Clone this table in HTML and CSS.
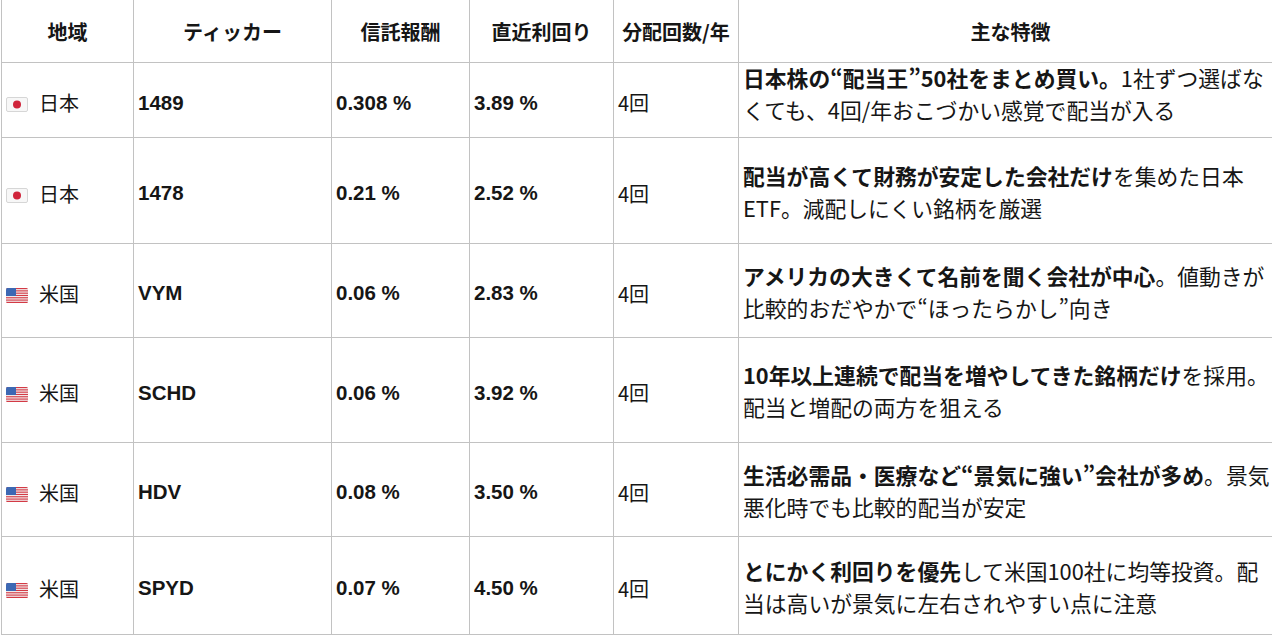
FILE: index.html
```html
<!DOCTYPE html>
<html lang="ja">
<head>
<meta charset="utf-8">
<title>高配当ETF比較</title>
<link rel="stylesheet" href="styles.css">
</head>
<body>
<table class="etf">
  <colgroup>
    <col class="c-region">
    <col class="c-ticker">
    <col class="c-fee">
    <col class="c-yield">
    <col class="c-freq">
    <col class="c-desc">
  </colgroup>
  <thead>
    <tr class="head">
      <th>地域</th>
      <th>ティッカー</th>
      <th>信託報酬</th>
      <th>直近利回り</th>
      <th>分配回数/年</th>
      <th>主な特徴</th>
    </tr>
  </thead>
  <tbody>
    <tr class="r1">
      <td class="region"><span class="flag"><svg viewBox="0 0 22 15" width="22" height="15"><rect x="0.5" y="0.5" width="21" height="14" rx="1.5" fill="#f7f7f7" stroke="#d6d6d6"/><circle cx="11" cy="7.5" r="4" fill="#d0243a"/></svg></span>日本</td>
      <td class="num">1489</td>
      <td class="num">0.308 %</td>
      <td class="num">3.89 %</td>
      <td class="freq">4回</td>
      <td class="desc top"><div class="txt"><b>日本株の“配当王”50社をまとめ買い。</b>1社ずつ選ばなくても、4回/年おこづかい感覚で配当が入る</div></td>
    </tr>
    <tr class="r2">
      <td class="region"><span class="flag"><svg viewBox="0 0 22 15" width="22" height="15"><rect x="0.5" y="0.5" width="21" height="14" rx="1.5" fill="#f7f7f7" stroke="#d6d6d6"/><circle cx="11" cy="7.5" r="4" fill="#d0243a"/></svg></span>日本</td>
      <td class="num">1478</td>
      <td class="num">0.21 %</td>
      <td class="num">2.52 %</td>
      <td class="freq">4回</td>
      <td class="desc"><div class="txt"><b>配当が高くて財務が安定した会社だけ</b>を集めた日本ETF。減配しにくい銘柄を厳選</div></td>
    </tr>
    <tr class="r3">
      <td class="region"><span class="flag"><svg viewBox="0 0 22 15" width="22" height="15"><defs><clipPath id="cl1"><rect width="22" height="15" rx="1.5"/></clipPath></defs><g clip-path="url(#cl1)"><rect width="22" height="15" fill="#f4f4f4"/><rect y="0" width="22" height="1.15" fill="#d33a45"/><rect y="2.3" width="22" height="1.15" fill="#d33a45"/><rect y="4.6" width="22" height="1.15" fill="#d33a45"/><rect y="6.9" width="22" height="1.15" fill="#d33a45"/><rect y="9.2" width="22" height="1.15" fill="#d33a45"/><rect y="11.5" width="22" height="1.15" fill="#d33a45"/><rect y="13.8" width="22" height="1.2" fill="#d33a45"/><rect width="10" height="8" fill="#3d68b3"/></g></svg></span>米国</td>
      <td class="num">VYM</td>
      <td class="num">0.06 %</td>
      <td class="num">2.83 %</td>
      <td class="freq">4回</td>
      <td class="desc"><div class="txt"><b>アメリカの大きくて名前を聞く会社が中心</b>。値動きが比較的おだやかで“ほったらかし”向き</div></td>
    </tr>
    <tr class="r4">
      <td class="region"><span class="flag"><svg viewBox="0 0 22 15" width="22" height="15"><defs><clipPath id="cl2"><rect width="22" height="15" rx="1.5"/></clipPath></defs><g clip-path="url(#cl2)"><rect width="22" height="15" fill="#f4f4f4"/><rect y="0" width="22" height="1.15" fill="#d33a45"/><rect y="2.3" width="22" height="1.15" fill="#d33a45"/><rect y="4.6" width="22" height="1.15" fill="#d33a45"/><rect y="6.9" width="22" height="1.15" fill="#d33a45"/><rect y="9.2" width="22" height="1.15" fill="#d33a45"/><rect y="11.5" width="22" height="1.15" fill="#d33a45"/><rect y="13.8" width="22" height="1.2" fill="#d33a45"/><rect width="10" height="8" fill="#3d68b3"/></g></svg></span>米国</td>
      <td class="num">SCHD</td>
      <td class="num">0.06 %</td>
      <td class="num">3.92 %</td>
      <td class="freq">4回</td>
      <td class="desc"><div class="txt"><b>10年以上連続で配当を増やしてきた銘柄だけ</b>を採用。配当と増配の両方を狙える</div></td>
    </tr>
    <tr class="r5">
      <td class="region"><span class="flag"><svg viewBox="0 0 22 15" width="22" height="15"><defs><clipPath id="cl3"><rect width="22" height="15" rx="1.5"/></clipPath></defs><g clip-path="url(#cl3)"><rect width="22" height="15" fill="#f4f4f4"/><rect y="0" width="22" height="1.15" fill="#d33a45"/><rect y="2.3" width="22" height="1.15" fill="#d33a45"/><rect y="4.6" width="22" height="1.15" fill="#d33a45"/><rect y="6.9" width="22" height="1.15" fill="#d33a45"/><rect y="9.2" width="22" height="1.15" fill="#d33a45"/><rect y="11.5" width="22" height="1.15" fill="#d33a45"/><rect y="13.8" width="22" height="1.2" fill="#d33a45"/><rect width="10" height="8" fill="#3d68b3"/></g></svg></span>米国</td>
      <td class="num">HDV</td>
      <td class="num">0.08 %</td>
      <td class="num">3.50 %</td>
      <td class="freq">4回</td>
      <td class="desc"><div class="txt"><b>生活必需品・医療など“景気に強い”会社が多め</b>。景気悪化時でも比較的配当が安定</div></td>
    </tr>
    <tr class="r6">
      <td class="region"><span class="flag"><svg viewBox="0 0 22 15" width="22" height="15"><defs><clipPath id="cl4"><rect width="22" height="15" rx="1.5"/></clipPath></defs><g clip-path="url(#cl4)"><rect width="22" height="15" fill="#f4f4f4"/><rect y="0" width="22" height="1.15" fill="#d33a45"/><rect y="2.3" width="22" height="1.15" fill="#d33a45"/><rect y="4.6" width="22" height="1.15" fill="#d33a45"/><rect y="6.9" width="22" height="1.15" fill="#d33a45"/><rect y="9.2" width="22" height="1.15" fill="#d33a45"/><rect y="11.5" width="22" height="1.15" fill="#d33a45"/><rect y="13.8" width="22" height="1.2" fill="#d33a45"/><rect width="10" height="8" fill="#3d68b3"/></g></svg></span>米国</td>
      <td class="num">SPYD</td>
      <td class="num">0.07 %</td>
      <td class="num">4.50 %</td>
      <td class="freq">4回</td>
      <td class="desc"><div class="txt"><b>とにかく利回りを優先</b>して米国100社に均等投資。配当は高いが景気に左右されやすい点に注意</div></td>
    </tr>
  </tbody>
</table>
</body>
</html>
```

FILE: styles.css
```css
html, body {
  margin: 0;
  padding: 0;
  background: #ffffff;
  overflow: hidden;
}

body {
  font-family: "Noto Sans CJK JP", "Noto Sans", sans-serif;
  color: #161616;
}

.etf {
  border-collapse: collapse;
  table-layout: fixed;
  width: 1281px;
  margin-left: 1px;
}

.c-region { width: 132px; }
.c-ticker { width: 198px; }
.c-fee { width: 138px; }
.c-yield { width: 144px; }
.c-freq { width: 125px; }
.c-desc { width: 544px; }

.etf th,
.etf td {
  border: 1px solid #c2c2c2;
  padding: 5px 4px 0;
  vertical-align: middle;
  text-align: left;
  overflow: hidden;
  white-space: nowrap;
}

.etf th {
  font-size: 20px;
  font-weight: 700;
  text-align: center;
  height: 62px;
  padding-top: 0;
}

.etf tr.head th {
  border-top: none;
}

.r1 td { height: 69px; }
.r2 td { height: 100px; }
.r3 td { height: 88px; }
.r4 td { height: 99px; }
.r5 td { height: 88px; }
.r6 td { height: 92px; }

.region {
  font-size: 20px;
  padding-left: 5px;
}

.flag {
  display: inline-block;
  width: 22px;
  height: 15px;
  margin-right: 11px;
  vertical-align: -1px;
}

.flag svg {
  display: block;
}

.num {
  font-family: "Liberation Sans", "Noto Sans CJK JP", sans-serif;
  font-weight: 700;
  font-size: 20.5px;
}

.freq {
  font-size: 20px;
}

.etf td.desc {
  white-space: normal;
  font-size: 21.8px;
  line-height: 32px;
  padding-top: 2px;
  padding-right: 7px;
}

.etf td.desc b {
  font-weight: 700;
}

.etf td.desc.top {
  vertical-align: top;
  padding-top: 0;
}

.desc.top .txt {
  margin-top: -1px;
}
```
